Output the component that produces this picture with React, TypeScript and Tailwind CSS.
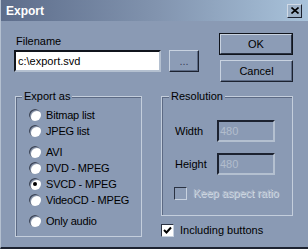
import type { ReactNode } from "react";

function Button({ children, primary, className }: { children: ReactNode; primary?: boolean; className?: string }) {
  if (primary) {
    return (
      <div className={"border border-[#10141c] " + (className ?? "")}>
        <div className="flex h-full items-center justify-center border border-t-[#c8d2e0] border-l-[#c8d2e0] border-r-[#2a3242] border-b-[#2a3242] bg-[#8c9cb6]">
          {children}
        </div>
      </div>
    );
  }
  return (
    <div
      className={
        "flex items-center justify-center border border-t-[#c8d2e0] border-l-[#c8d2e0] border-r-[#1c2230] border-b-[#1c2230] bg-[#8c9cb6] shadow-[inset_-1px_-1px_0_#5c6a84] " +
        (className ?? "")
      }
    >
      {children}
    </div>
  );
}

function Radio({ label, checked }: { label: string; checked?: boolean }) {
  return (
    <div className="flex h-[16px] items-center gap-[5px] pl-[13px]">
      <span className="flex h-[12px] w-[12px] items-center justify-center rounded-full bg-white shadow-[inset_1px_1px_0_#3a4458,inset_2px_2px_0_#8a96aa]">
        {checked && <span className="h-[4px] w-[4px] rounded-full bg-black" />}
      </span>
      <span className="tracking-[-0.2px]">{label}</span>
    </div>
  );
}

function Check({ checked, disabled }: { checked?: boolean; disabled?: boolean }) {
  return (
    <span
      className={
        "flex h-[13px] w-[13px] shrink-0 items-center justify-center border border-t-[#2a3242] border-l-[#2a3242] border-r-[#c8d2e0] border-b-[#c8d2e0] " +
        (disabled ? "bg-[#8c9cb6]" : "bg-white")
      }
    >
      {checked && (
        <svg width="9" height="9" viewBox="0 0 9 9">
          <path d="M1 4 L3.5 6.5 L8 1.5" fill="none" stroke="#000" strokeWidth="2" />
        </svg>
      )}
    </span>
  );
}

function NumField({ label }: { label: string }) {
  return (
    <div className="flex items-center">
      <span className="w-[55px] pl-[13px]">{label}</span>
      <div className="flex h-[22px] w-[58px] items-center border-2 border-t-[#1c2230] border-l-[#1c2230] border-r-[#b4c0d0] border-b-[#b4c0d0] pl-[1px] text-[#b2bdcd]">
        480
      </div>
    </div>
  );
}

export default function App() {
  return (
    <div className="flex h-[249px] w-[308px] flex-col overflow-hidden border-b-2 border-l border-b-[#1c2230] border-l-[#b4c0d0] bg-[#8a9ab4] font-['Liberation_Sans',Arial,sans-serif] text-[11px] leading-[14px] text-black">
      <div className="flex h-[21px] shrink-0 items-center justify-between bg-gradient-to-r from-[#5d6d8b] via-[#8193ae] to-[#a9c3db] pl-[5px] pr-[6px]">
        <span className="text-[12px] font-bold text-white">Export</span>
        <div className="flex h-[14px] w-[15px] items-center justify-center border border-t-[#d0dae6] border-l-[#d0dae6] border-r-[#1c2230] border-b-[#1c2230] bg-[#9eb2c8]">
          <svg width="8" height="7" viewBox="0 0 8 7">
            <path d="M0.5 0.5 L7.5 6.5 M7.5 0.5 L0.5 6.5" stroke="#000" strokeWidth="1.6" />
          </svg>
        </div>
      </div>

      <div className="flex flex-1 flex-col pl-[13px] pr-[15px]">
        <div className="flex justify-between pt-[12px]">
          <div className="flex flex-col">
            <div className="h-[16px] pl-[2px] pt-[1px]">Filename</div>
            <div className="mt-[1px] flex gap-[8px]">
              <div className="flex h-[22px] w-[147px] items-center border-2 border-t-[#10141c] border-l-[#10141c] border-r-[#b4c0d0] border-b-[#b4c0d0] bg-white pl-[2px]">
                c:\export.svd
              </div>
              <Button className="h-[22px] w-[30px] text-[#3a4458]">...</Button>
            </div>
          </div>
          <div className="flex flex-col gap-[5px]">
            <Button primary className="h-[22px] w-[74px]">OK</Button>
            <Button className="h-[22px] w-[73px] self-end">Cancel</Button>
          </div>
        </div>

        <div className="mt-[7px] flex gap-[19px] pl-[1px]">
          <fieldset className="w-[128px] border border-[#c4cedc] pb-[5px] shadow-[inset_1px_1px_0_#5c6a84]">
            <legend className="ml-[6px] bg-[#8a9ab4] px-[2px]">Export as</legend>
            <div className="pt-[4px]">
              <Radio label="Bitmap list" />
              <Radio label="JPEG list" />
              <div className="h-[5px]" />
              <Radio label="AVI" />
              <Radio label="DVD - MPEG" />
              <Radio label="SVCD - MPEG" checked />
              <Radio label="VideoCD - MPEG" />
              <div className="h-[5px]" />
              <Radio label="Only audio" />
            </div>
          </fieldset>

          <div className="flex flex-col">
            <fieldset className="w-[132px] border border-[#c4cedc] pb-[15px] shadow-[inset_1px_1px_0_#5c6a84]">
              <legend className="ml-[7px] bg-[#8a9ab4] px-[2px]">Resolution</legend>
              <div className="flex flex-col gap-[11px] pt-[17px]">
                <NumField label="Width" />
                <NumField label="Height" />
                <div className="flex items-center gap-[6px] pl-[12px]">
                  <Check disabled />
                  <span className="text-[#aeb9ca] [text-shadow:1px_1px_0_#d6dee8]">Keep aspect ratio</span>
                </div>
              </div>
            </fieldset>
            <div className="mt-[7px] flex items-center gap-[6px]">
              <Check checked />
              <span>Including buttons</span>
            </div>
          </div>
        </div>
      </div>
    </div>
  );
}
